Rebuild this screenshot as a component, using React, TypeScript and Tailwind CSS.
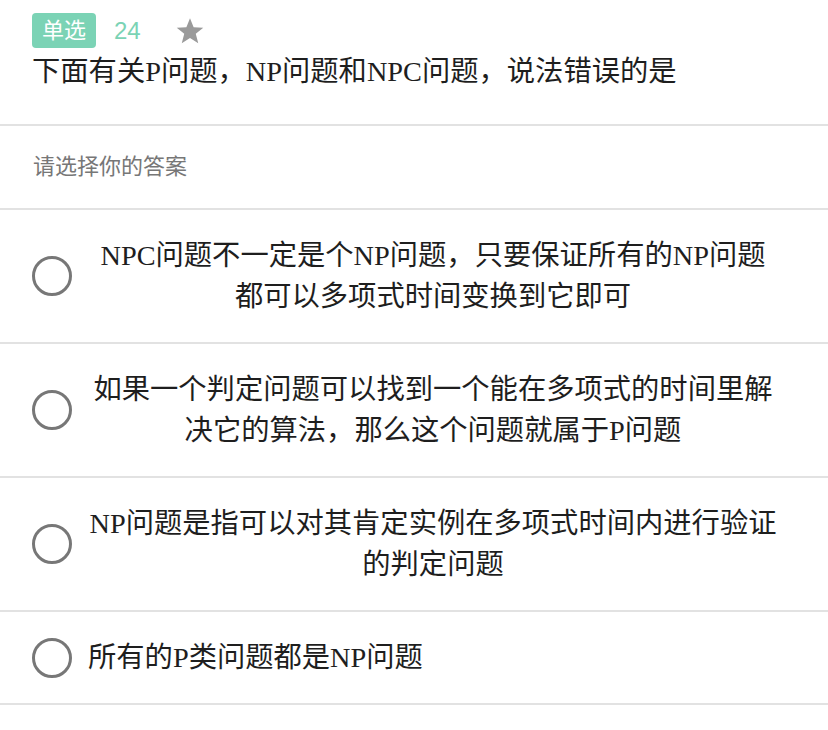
import React from "react";

const options = [
  "NPC问题不一定是个NP问题，只要保证所有的NP问题都可以多项式时间变换到它即可",
  "如果一个判定问题可以找到一个能在多项式的时间里解决它的算法，那么这个问题就属于P问题",
  "NP问题是指可以对其肯定实例在多项式时间内进行验证的判定问题",
  "所有的P类问题都是NP问题",
];

const serif = "font-['Liberation_Serif','Noto_Sans_CJK_SC',serif]";
const sans = "font-['Liberation_Sans','Noto_Sans_CJK_SC',sans-serif]";

export default function App() {
  return (
    <div className="w-[828px] min-h-[730px] bg-white">
      {/* header */}
      <div className="pl-8 pt-[13px] pb-[32px]">
        <div className="flex items-center h-[35px]">
          <span className={`${sans} h-[35px] px-[10px] rounded-[4px] bg-[#7bd3b5] text-white text-[22px] leading-[35px]`}>
            单选
          </span>
          <span className={`${sans} ml-[18px] text-[#7bd3b5] text-[24px] leading-none`}>24</span>
          <svg className="ml-[34px]" width="30" height="30" viewBox="0 0 24 24">
            <polygon
              points="12,1.8 14.9,9 22.6,9.4 16.6,14.2 18.6,21.7 12,17.5 5.4,21.7 7.4,14.2 1.4,9.4 9.1,9"
              fill="#9a9a9a"
            />
          </svg>
        </div>
        <div className={`${serif} mt-[3px] text-[28.3px] leading-[41px] text-[#1e1e1e]`}>
          下面有关P问题，NP问题和NPC问题，说法错误的是
        </div>
      </div>

      <div className="h-[2px] bg-[#e2e2e2]" />

      <div className={`${sans} pl-[33px] py-[26px] text-[22px] leading-[30px] text-[#777]`}>请选择你的答案</div>

      <div className="h-[2px] bg-[#e2e2e2]" />

      {options.map((o) => (
        <div key={o}>
          <div className="flex items-center pl-8 pr-[50px] py-[25px]">
            <span className="shrink-0 w-[40px] h-[40px] rounded-full border-[3px] border-[#777]" />
            <span className={`${serif} ml-4 text-center text-[28.3px] leading-[41px] text-[#1e1e1e]`}>{o}</span>
          </div>
          <div className="h-[2px] bg-[#e2e2e2]" />
        </div>
      ))}
    </div>
  );
}
